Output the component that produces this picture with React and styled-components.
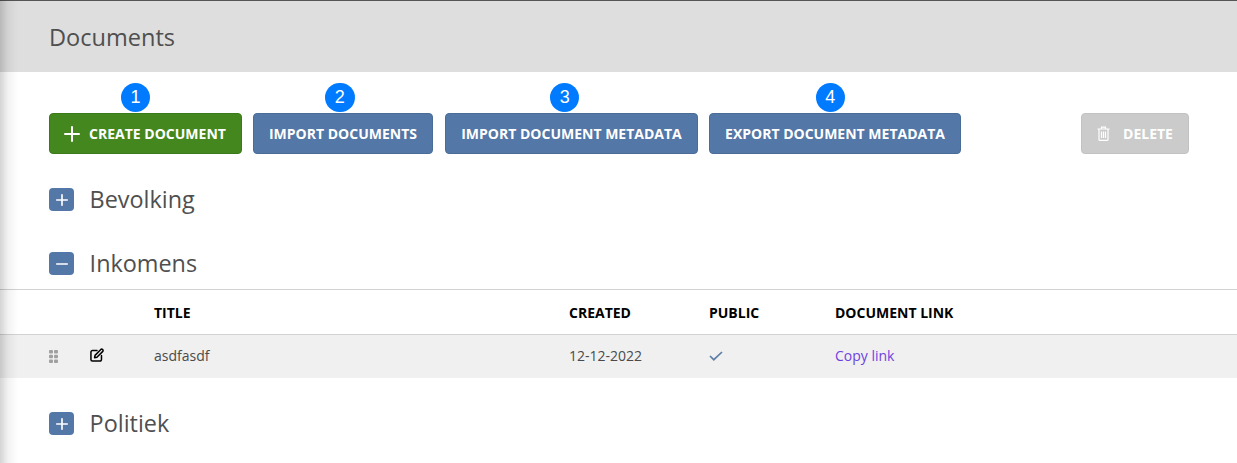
import React from "react";
import styled, { createGlobalStyle } from "styled-components";
import { Plus, Minus } from "lucide-react";

const Global = createGlobalStyle`
  html, body { margin: 0; padding: 0; background: #fff; }
  body { font-family: "Open Sans", "Noto Sans", sans-serif; color: #4d4d4d; overflow: hidden; }
`;

const Page = styled.div`
  position: relative;
  width: 1237px;
  height: 463px;
  overflow: hidden;
  background: #fff;
`;

const SideShadow = styled.div`
  position: absolute;
  left: 0;
  top: 0;
  bottom: 0;
  width: 18px;
  pointer-events: none;
  background: linear-gradient(to right, rgba(0,0,0,0.17), rgba(0,0,0,0.05) 45%, rgba(0,0,0,0));
`;

const Header = styled.header`
  box-sizing: border-box;
  border-top: 1px solid #555;
  height: 72px;
  background: #dedede;
  padding-left: 49px;
  display: flex;
  align-items: center;
`;

const PageTitle = styled.h1`
  margin: 0;
  font-size: 23.55px;
  font-weight: 400;
  color: #4f4f4f;
  line-height: 30px;
`;

const Toolbar = styled.div`
  display: flex;
  margin: 41px 48px 0 49px;
  height: 41px;
`;

const Slot = styled.div`
  position: relative;
  margin-right: ${p => p.$gap}px;
`;

const Badge = styled.span`
  position: absolute;
  top: -30.4px;
  left: ${p => p.$left}px;
  width: 29.6px;
  height: 29.6px;
  border-radius: 50%;
  background: #007bff;
  color: #fff;
  font-family: "Liberation Sans", Arial, sans-serif;
  font-size: 18px;
  line-height: 29.6px;
  text-align: center;
`;

const Button = styled.button`
  height: 41px;
  box-sizing: border-box;
  width: ${p => p.$w}px;
  padding: 0;
  display: flex;
  align-items: center;
  justify-content: center;
  font-family: inherit;
  font-weight: 700;
  font-size: 14px;
  text-transform: uppercase;
  color: #fff;
  border-radius: 4px;
  border: 1px solid ${p => p.$variant === "green" ? "#3b7a1a" : p.$variant === "muted" ? "#c2c2c2" : "#4a6d98"};
  background: ${p => p.$variant === "green" ? "#44871e" : p.$variant === "muted" ? "#cbcbcb" : "#5377a6"};
`;

const ButtonIcon = styled.span`
  display: inline-flex;
  margin: 0 ${p => p.$gap}px 0 ${p => p.$lead || 0}px;
`;

const Spacer = styled.div`
  flex: 1;
`;

const Section = styled.section`
  margin-top: ${p => p.$top}px;
`;

const SectionHead = styled.div`
  display: flex;
  align-items: center;
  height: 23px;
  padding-left: 49px;
`;

const Toggle = styled.span`
  width: 25px;
  height: 23px;
  border-radius: 4px;
  background: #5377a6;
  color: #fff;
  display: flex;
  align-items: center;
  justify-content: center;
`;

const SectionTitle = styled.h2`
  margin: -1px 0 0 15.6px;
  font-size: 23.4px;
  font-weight: 400;
  line-height: 23px;
  color: #4f4f4f;
`;

const Table = styled.div`
  margin-top: 14px;
  border-top: 1px solid #d2d2d2;
`;

const Row = styled.div`
  display: grid;
  grid-template-columns: 40px 65px 415px 140px 126px 1fr;
  align-items: center;
  padding-left: 49px;
`;

const HeadRow = styled(Row)`
  height: 44px;
  border-bottom: 1px solid #d2d2d2;
  font-size: 14px;
  font-weight: 700;
  color: #000;
  text-transform: uppercase;
`;

const BodyRow = styled(Row)`
  height: 43px;
  padding-bottom: 2px;
  box-sizing: border-box;
  background: #f0f0f0;
  font-size: 14px;
  color: #4a4a4a;
`;

const CopyLink = styled.a`
  color: #6f42e0;
  text-decoration: none;
`;

const IconCell = styled.span`
  display: flex;
  align-items: center;
  padding-left: ${p => p.$indent || 0}px;
  margin-top: ${p => p.$shift || 0}px;
`;

const Grip = () => (
  <svg width="9" height="13" viewBox="0 0 9 13" fill="#a0a0a0">
    {[0, 4.7, 9.4].map(y => [0, 5].map(x => <rect key={`${x}-${y}`} x={x} y={y} width="4" height="3.6" rx="1" />))}
  </svg>
);

const Edit = () => (
  <svg width="14" height="14" viewBox="0 0 15 15" fill="none" stroke="#000" strokeWidth="1.6">
    <path d="M7.5 2.7H2.6A1.6 1.6 0 0 0 1 4.3v8.1A1.6 1.6 0 0 0 2.6 14h8.1a1.6 1.6 0 0 0 1.6-1.6V8" strokeLinecap="round" />
    <path d="M5.4 7.9 11.6 1.5a1.2 1.2 0 0 1 1.7 0l.4.4a1.2 1.2 0 0 1 0 1.7L7.4 9.9l-2.5.5z" strokeLinejoin="round" />
  </svg>
);

const Trash = () => (
  <svg width="13" height="15" viewBox="0 0 13 15" fill="none" stroke="#fff" strokeWidth="1.2">
    <path d="M.5 3h12M4.5 3V1.2h4V3M2 3v10.4c0 .6.4 1 1 1h7c.6 0 1-.4 1-1V3M4.5 5.5v6.5M6.5 5.5v6.5M8.5 5.5v6.5" />
  </svg>
);

const Check = () => (
  <svg width="14" height="10" viewBox="0 0 14 10" fill="none" stroke="#5f7fa8" strokeWidth="1.7">
    <path d="M1 5 4.8 8.7 13 1" />
  </svg>
);

const Group = ({ title, open, top, children }) => (
  <Section $top={top}>
    <SectionHead>
      <Toggle>{open ? <Minus size={18} strokeWidth={2.2} /> : <Plus size={18} strokeWidth={2.2} />}</Toggle>
      <SectionTitle>{title}</SectionTitle>
    </SectionHead>
    {children}
  </Section>
);

export default function App() {
  return (
    <Page>
      <Global />
      <Header>
        <PageTitle>Documents</PageTitle>
      </Header>
      <Toolbar>
        <Slot $gap={11}>
          <Badge $left={71.7}>1</Badge>
          <Button $variant="green" $w={193}>
            <ButtonIcon $gap={5} $lead={-5}><Plus size={24} strokeWidth={2} /></ButtonIcon>
            Create document
          </Button>
        </Slot>
        <Slot $gap={12}>
          <Badge $left={72}>2</Badge>
          <Button $w={180}>Import documents</Button>
        </Slot>
        <Slot $gap={11}>
          <Badge $left={104.9}>3</Badge>
          <Button $w={253}>Import document metadata</Button>
        </Slot>
        <Slot $gap={0}>
          <Badge $left={106.5}>4</Badge>
          <Button $w={252}>Export document metadata</Button>
        </Slot>
        <Spacer />
        <Button $variant="muted" $w={108}>
          <ButtonIcon $gap={13}><Trash /></ButtonIcon>
          Delete
        </Button>
      </Toolbar>
      <Group title="Bevolking" top={34} />
      <Group title="Inkomens" open top={41}>
        <Table>
          <HeadRow>
            <span />
            <span />
            <span>Title</span>
            <span>Created</span>
            <span>Public</span>
            <span>Document link</span>
          </HeadRow>
          <BodyRow>
            <IconCell $shift={2}><Grip /></IconCell>
            <IconCell $indent={1} $shift={-2}><Edit /></IconCell>
            <span>asdfasdf</span>
            <span>12-12-2022</span>
            <IconCell><Check /></IconCell>
            <CopyLink href="#">Copy link</CopyLink>
          </BodyRow>
        </Table>
      </Group>
      <Group title="Politiek" top={34} />
      <SideShadow />
    </Page>
  );
}
